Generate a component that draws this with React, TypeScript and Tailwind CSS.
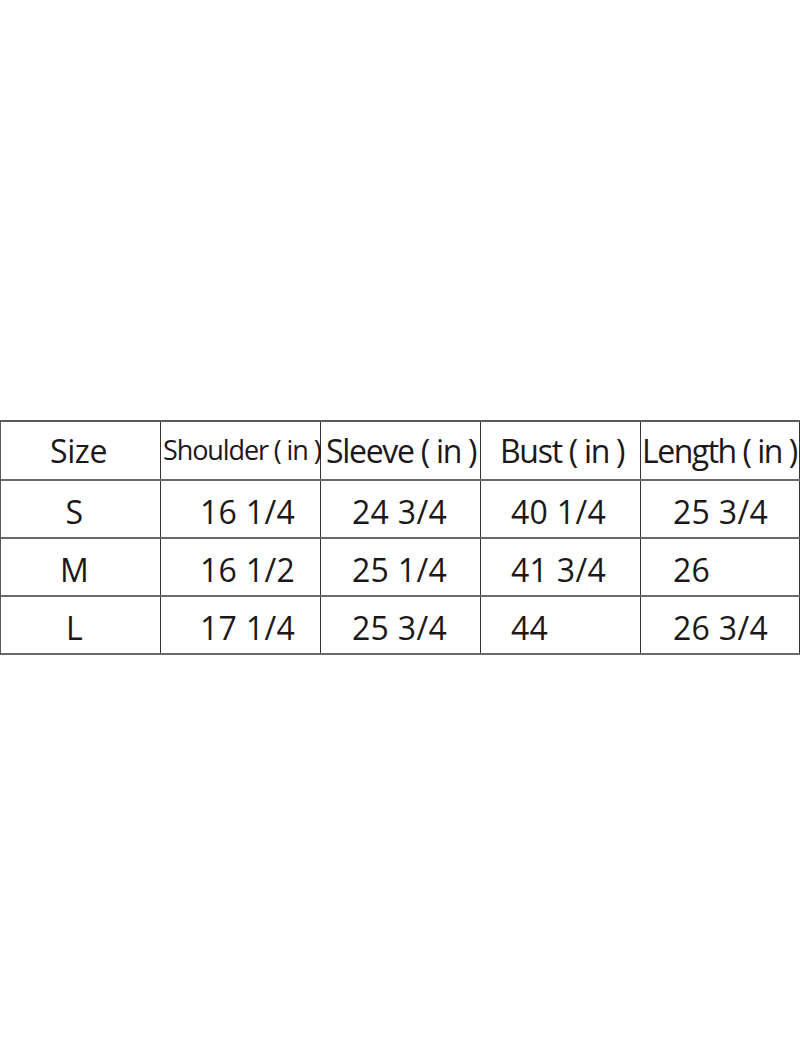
import React from "react";

const headers = [
  { label: "Size", cls: "justify-center text-[32px] tracking-[-0.4px] pr-[4px]" },
  { label: "Shoulder ( in )", cls: "justify-start pl-[2px] text-[27px] tracking-[-1.1px]" },
  { label: "Sleeve ( in )", cls: "justify-start pl-[5px] text-[32px] tracking-[-1.3px]" },
  { label: "Bust ( in )", cls: "justify-start pl-[19px] text-[32px] tracking-[-1.3px]" },
  { label: "Length ( in )", cls: "justify-start pl-[1px] text-[32px] tracking-[-1.5px]" },
];

const rows = [
  ["S", "16 1/4", "24 3/4", "40 1/4", "25 3/4"],
  ["M", "16 1/2", "25 1/4", "41 3/4", "26"],
  ["L", "17 1/4", "25 3/4", "44", "26 3/4"],
];

const dataPad = ["", "pl-[39px]", "pl-[31px]", "pl-[30px]", "pl-[32px]"];
const widths = ["w-[160px]", "w-[160px]", "w-[160px]", "w-[160px]", "w-[159px]"];

export default function App() {
  return (
    <div
      className="w-[800px] h-[1050px] bg-white pt-[420px] text-[#1c1819]"
      style={{ fontFamily: '"Open Sans", "Noto Sans", sans-serif' }}
    >
      <div className="w-[800px] border-t-2 border-l border-[#5a5a5a]">
        <div className="flex h-[59px] border-b-2 border-[#6a6a6a]">
          {headers.map((h, i) => (
            <div
              key={h.label}
              className={`${widths[i]} flex items-center whitespace-nowrap border-r border-[#333] overflow-visible ${h.cls}`}
            >
              {h.label}
            </div>
          ))}
        </div>
        {rows.map((r) => (
          <div key={r[0]} className="flex h-[58px] border-b-2 border-[#6a6a6a]">
            {r.map((v, i) => (
              <div
                key={i}
                className={`${widths[i]} flex items-center whitespace-nowrap border-r border-[#333] pt-[5px] text-[32px] tracking-[0.3px] ${
                  i === 0 ? "justify-center pr-[12px] text-[29px]" : `justify-start ${dataPad[i]}`
                }`}
              >
                {v}
              </div>
            ))}
          </div>
        ))}
      </div>
    </div>
  );
}
